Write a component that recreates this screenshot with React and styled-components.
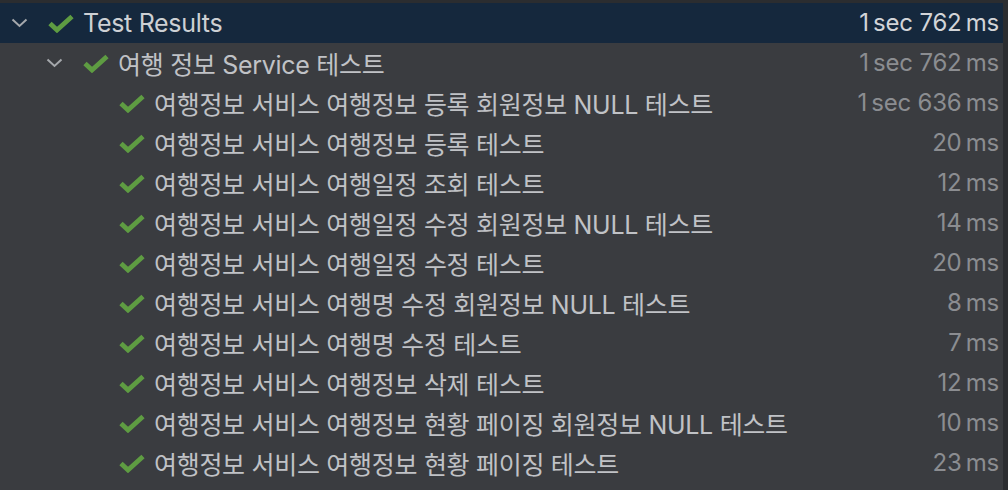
import React from "react";
import styled, { createGlobalStyle } from "styled-components";

const GlobalStyle = createGlobalStyle`
  html, body {
    margin: 0;
    padding: 0;
    background: #3a3c40;
  }
`;

const Panel = styled.div`
  width: 1008px;
  height: 490px;
  box-sizing: border-box;
  background: #3a3c40;
  border-top: 3px solid #2b2d30;
  border-right: 5px solid #2b2d30;
  overflow: hidden;
  font-family: "Inter", "Noto Sans CJK KR", sans-serif;
`;

const Row = styled.div`
  display: flex;
  align-items: center;
  height: 40px;
  padding-left: ${(p) => p.indent}px;
  padding-right: 4px;
  background: ${(p) => (p.selected ? "#15283d" : "transparent")};
`;

const Toggle = styled.span`
  display: flex;
  align-items: center;
  justify-content: center;
  width: 19px;
  margin-right: 19px;
`;

const Check = styled.span`
  display: flex;
  align-items: center;
  width: 27px;
  margin-right: 8px;
`;

const Label = styled.span`
  font-size: 25px;
  letter-spacing: -0.3px;
  margin-top: -1px;
  color: ${(p) => (p.root ? "#cdd0d4" : "#c0c2c6")};
  white-space: nowrap;
`;

const Time = styled.span`
  margin-left: auto;
  margin-top: -1px;
  font-size: 24px;
  letter-spacing: -0.2px;
  color: ${(p) => (p.root ? "#d2d4d8" : "#8b8d91")};
  white-space: nowrap;
`;

const Chevron = () => (
  <svg width="17" height="10" viewBox="0 0 17 10">
    <path d="M1.5 1.5 L8.5 8 L15.5 1.5" fill="none" stroke="#a5a8ac" strokeWidth="2" />
  </svg>
);

const CheckIcon = () => (
  <svg width="26" height="19" viewBox="0 0 26 19">
    <path d="M2 9.5 L9 16 L24 2.5" fill="none" stroke="#5e9c42" strokeWidth="4.8" strokeLinejoin="miter" />
  </svg>
);

const tests = [
  ["여행정보 서비스 여행정보 등록 회원정보 NULL 테스트", "1\u2009sec 636\u2009ms"],
  ["여행정보 서비스 여행정보 등록 테스트", "20\u2009ms"],
  ["여행정보 서비스 여행일정 조회 테스트", "12\u2009ms"],
  ["여행정보 서비스 여행일정 수정 회원정보 NULL 테스트", "14\u2009ms"],
  ["여행정보 서비스 여행일정 수정 테스트", "20\u2009ms"],
  ["여행정보 서비스 여행명 수정 회원정보 NULL 테스트", "8\u2009ms"],
  ["여행정보 서비스 여행명 수정 테스트", "7\u2009ms"],
  ["여행정보 서비스 여행정보 삭제 테스트", "12\u2009ms"],
  ["여행정보 서비스 여행정보 현황 페이징 회원정보 NULL 테스트", "10\u2009ms"],
  ["여행정보 서비스 여행정보 현황 페이징 테스트", "23\u2009ms"],
];

export default function App() {
  return (
    <>
      <GlobalStyle />
      <Panel>
        <Row indent={10} selected>
          <Toggle>
            <Chevron />
          </Toggle>
          <Check>
            <CheckIcon />
          </Check>
          <Label root>Test Results</Label>
          <Time root>1{"\u2009"}sec 762{"\u2009"}ms</Time>
        </Row>
        <Row indent={45}>
          <Toggle>
            <Chevron />
          </Toggle>
          <Check>
            <CheckIcon />
          </Check>
          <Label>여행 정보 Service 테스트</Label>
          <Time>1{"\u2009"}sec 762{"\u2009"}ms</Time>
        </Row>
        {tests.map(([name, time]) => (
          <Row key={name} indent={119}>
            <Check>
              <CheckIcon />
            </Check>
            <Label>{name}</Label>
            <Time>{time}</Time>
          </Row>
        ))}
      </Panel>
    </>
  );
}
